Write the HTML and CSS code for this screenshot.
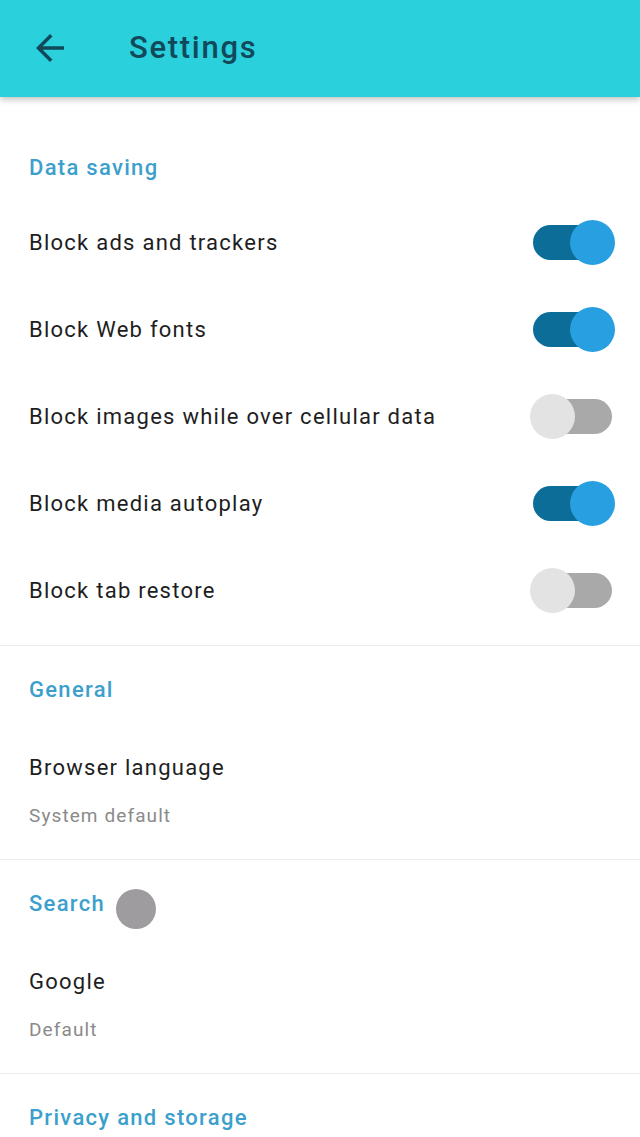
FILE: index.html
```html
<!DOCTYPE html>
<html lang="en">
<head>
<meta charset="utf-8">
<title>Settings</title>
<link rel="stylesheet" href="styles.css">
</head>
<body>
<header class="appbar">
  <svg class="back" viewBox="0 0 24 24" width="42" height="42" aria-hidden="true">
    <path d="M20 11H7.83l5.59-5.59L12 4l-8 8 8 8 1.41-1.41L7.83 13H20v-2z" fill="currentColor"/>
  </svg>
  <h1 class="appbar-title">Settings</h1>
</header>
<main>
  <section class="section section-first">
    <h2 class="section-title">Data saving</h2>
    <div class="switch-row"><span class="label">Block ads and trackers</span><span class="toggle on"><span class="track"></span><span class="knob"></span></span></div>
    <div class="switch-row"><span class="label">Block Web fonts</span><span class="toggle on"><span class="track"></span><span class="knob"></span></span></div>
    <div class="switch-row"><span class="label">Block images while over cellular data</span><span class="toggle"><span class="track"></span><span class="knob"></span></span></div>
    <div class="switch-row"><span class="label">Block media autoplay</span><span class="toggle on"><span class="track"></span><span class="knob"></span></span></div>
    <div class="switch-row"><span class="label">Block tab restore</span><span class="toggle"><span class="track"></span><span class="knob"></span></span></div>
  </section>
  <section class="section">
    <h2 class="section-title">General</h2>
    <div class="item">
      <div class="label">Browser language</div>
      <div class="sub">System default</div>
    </div>
  </section>
  <section class="section">
    <h2 class="section-title">Search <span class="touch"></span></h2>
    <div class="item">
      <div class="label">Google</div>
      <div class="sub">Default</div>
    </div>
  </section>
  <section class="section section-last">
    <h2 class="section-title">Privacy and storage</h2>
  </section>
</main>
</body>
</html>
```

FILE: styles.css
```css
html, body {
  margin: 0;
  padding: 0;
  background: #ffffff;
  font-family: Roboto, "Noto Sans", "Liberation Sans", sans-serif;
  overflow: hidden;
}

.appbar {
  position: relative;
  z-index: 2;
  height: 97px;
  background: #2bd0dd;
  display: flex;
  align-items: center;
  padding-left: 29px;
  box-shadow: 0 3px 6px rgba(0, 0, 0, 0.22);
}

.back {
  color: #11495a;
  flex: none;
  margin-top: -2px;
}

.appbar-title {
  margin: -2px 0 0 58px;
  font-size: 31px;
  font-weight: 500;
  color: #11495a;
  letter-spacing: 1.7px;
}

.section {
  border-bottom: 1px solid #ebebeb;
}

.section-last {
  border-bottom: none;
}

.section-title {
  margin: 0;
  padding: 29px 29px 0;
  height: 30px;
  line-height: 30px;
  font-size: 22px;
  font-weight: 500;
  color: #3c9fcc;
  letter-spacing: 1.3px;
  display: flex;
  align-items: center;
}

.section-first {
  padding-bottom: 11px;
}

.section-first .section-title {
  padding-top: 56px;
  margin-bottom: 16px;
}

.switch-row {
  height: 87px;
  display: flex;
  align-items: center;
  justify-content: space-between;
  padding: 0 25px 0 29px;
}

.label {
  font-size: 22px;
  color: #1e1e1e;
  line-height: 30px;
  letter-spacing: 1.25px;
}

.toggle {
  position: relative;
  width: 85px;
  height: 45px;
  flex: none;
}

.track {
  position: absolute;
  left: 3px;
  right: 3px;
  top: 5px;
  height: 35px;
  border-radius: 18px;
  background: #a9a9a9;
}

.knob {
  position: absolute;
  top: 0;
  left: 0;
  width: 45px;
  height: 45px;
  border-radius: 50%;
  background: #e3e3e3;
}

.toggle.on .track {
  background: #0c6d98;
}

.toggle.on .knob {
  left: auto;
  right: 0;
  background: #289fe0;
}

.item {
  padding: 48px 29px 28px;
}

.sub {
  margin-top: 18px;
  font-size: 19px;
  line-height: 30px;
  color: #8a8a8a;
  letter-spacing: 1.1px;
}

.touch {
  display: inline-block;
  width: 40px;
  height: 40px;
  border-radius: 50%;
  background: #9e9c9e;
  margin-left: 11px;
  margin-top: 10px;
}
```
